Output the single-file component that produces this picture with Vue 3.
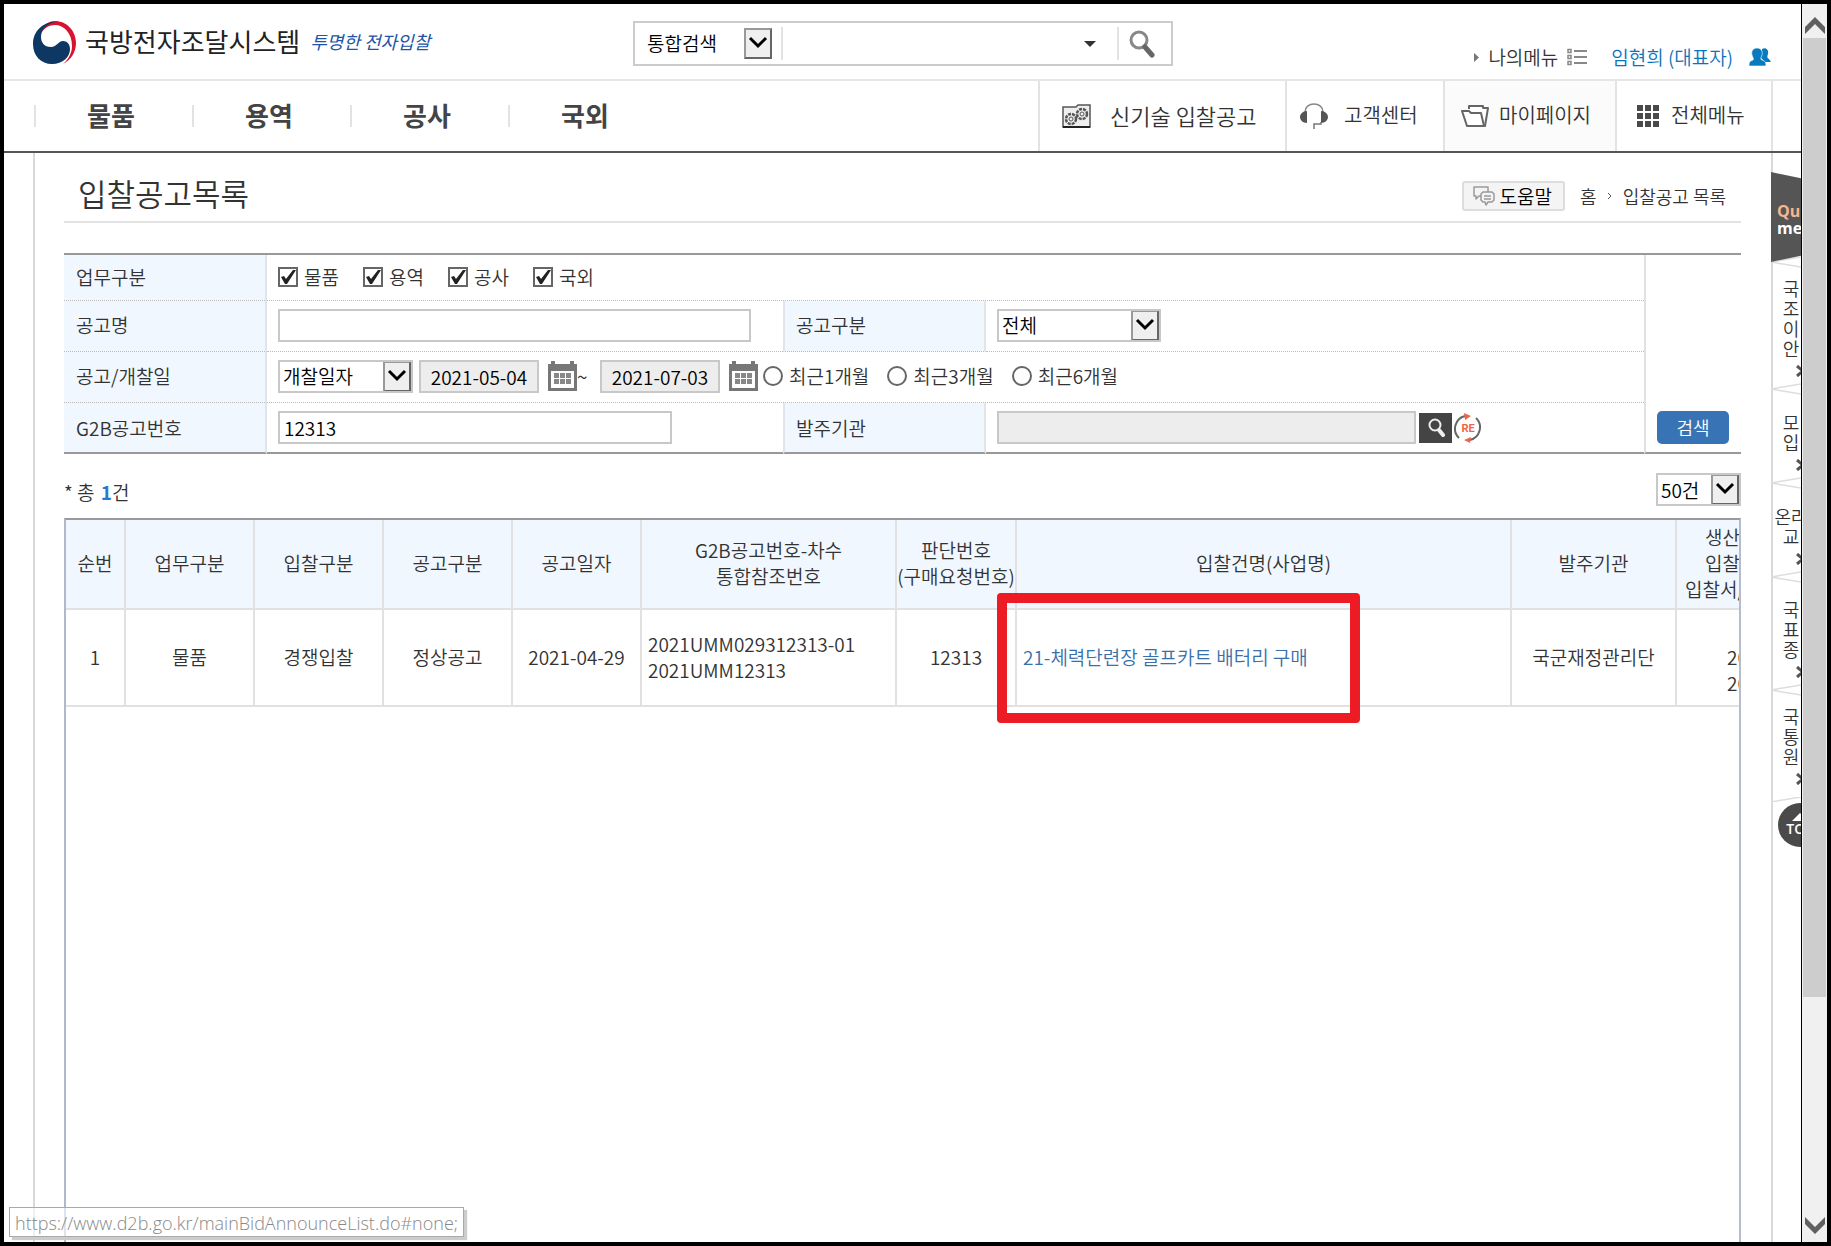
<script setup>
import { ref } from 'vue'

const mainMenu = ['물품', '용역', '공사', '국외']
const kinds = ref([
  { name: '물품', on: true },
  { name: '용역', on: true },
  { name: '공사', on: true },
  { name: '국외', on: true }
])
const periods = ['최근1개월', '최근3개월', '최근6개월']
const period = ref('')
const g2bNo = ref('12313')
const dateFrom = ref('2021-05-04')
const dateTo = ref('2021-07-03')

const headings = [
  ['순번'], ['업무구분'], ['입찰구분'], ['공고구분'], ['공고일자'],
  ['G2B공고번호-차수', '통합참조번호'],
  ['판단번호', '(구매요청번호)'],
  ['입찰건명(사업명)'], ['발주기관']
]

const quickItems = [
  { lines: ['국', '조', '이', '안'], height: 127 },
  { lines: ['모', '입'], height: 94 },
  { lines: ['온라', '교'], height: 94 },
  { lines: ['국', '표', '종'], height: 113 },
  { lines: ['국', '통', '원'], height: 107 }
]
</script>

<template>
  <div class="frame">
    <div class="page">
      <header class="top">
        <a class="logo" href="#">
          <svg width="44" height="44" viewBox="0 0 44 44" aria-hidden="true">
            <path d="M22 0C33 0 43 9 43 22C43 31 38 39 30 43C36 38 39 31 39 25C39 12 31 4 22 4C15 4 10 8 8 13C9 6 14 0 22 0Z" fill="#d8122f" />
            <path d="M22 1C10 1 0 10 0 23C0 35 8 43 19 43C30 43 37 36 37 28C37 23 34 20 30 20C25 20 24 26 18 26C11 26 8 21 8 16C8 8 14 3 22 1Z" fill="#0e3763" />
          </svg>
          <span class="logo-name">국방전자조달시스템</span>
          <span class="slogan">투명한 전자입찰</span>
        </a>
        <form class="finder" @submit.prevent>
          <select class="pick finder-pick" aria-label="검색 구분"><option>통합검색</option></select>
          <input class="finder-text" type="text" aria-label="검색어" />
          <button class="bare finder-drop" type="button" aria-label="펼치기">
            <svg width="12" height="6" viewBox="0 0 12 6"><path d="M0 0H12L6 6Z" fill="#333" /></svg>
          </button>
          <button class="bare finder-go" type="submit" aria-label="검색">
            <svg width="28" height="28" viewBox="0 0 28 28" fill="none">
              <circle cx="11" cy="10" r="8" stroke="#888" stroke-width="3" />
              <path d="M17 17L24 25" stroke="#666" stroke-width="5" stroke-linecap="round" />
            </svg>
          </button>
        </form>
        <div class="account">
          <a class="my-menu" href="#">
            <svg width="5" height="9" viewBox="0 0 5 9"><path d="M0 0L5 4.500L0 9Z" fill="#777" /></svg>
            <span>나의메뉴</span>
            <svg width="20" height="18" viewBox="0 0 20 18" fill="none" stroke="#888">
              <path d="M1 1.500H4V4.500H1ZM1 7.500H4V10.500H1ZM1 13.500H4V16.500H1Z" stroke-width="1.500" />
              <path d="M7 3H20M7 9H20M7 15H20" stroke-width="2" />
            </svg>
          </a>
          <a class="user" href="#">
            <span>임현희 (대표자)</span>
            <svg width="22" height="18" viewBox="0 0 22 18" fill="#0a7abf">
              <path d="M13 1C17 -1 20 2 19 6C18 9 18 10 20 11L22 14H16L12 10Z" />
              <path d="M8 0C12 0 14 3 13 7C12 10 11 11 13 12C16 13 17 14 17 18H0C0 14 1 13 4 12C5 11 4 10 3 7C2 3 4 0 8 0Z" stroke="#fff" stroke-width=".6" />
            </svg>
          </a>
        </div>
      </header>

      <nav class="nav">
        <ul class="nav-main">
          <li v-for="m in mainMenu" :key="m"><a href="#">{{ m }}</a></li>
        </ul>
        <a class="util tech" href="#">
          <svg width="29" height="24" viewBox="0 0 29 24" fill="none" stroke="#555">
            <path d="M1 3H14L16 1H28V23H1Z" stroke-width="1.500" fill="#eee" />
            <path d="M1 23H28" stroke-width="2" stroke="#222" />
            <circle cx="9" cy="15" r="5" stroke-width="2.500" stroke-dasharray="3 1" />
            <circle cx="9" cy="15" r="2" />
            <circle cx="20" cy="10" r="5" stroke-width="2.500" stroke-dasharray="3 1" />
            <circle cx="20" cy="10" r="2" />
          </svg>
          <span>신기술 입찰공고</span>
        </a>
        <a class="util help" href="#">
          <svg width="28" height="27" viewBox="0 0 28 27" fill="none">
            <path d="M5 13V9C5 4 9 1 14 1S23 4 23 9V13" stroke="#888" stroke-width="1.500" />
            <path d="M7 8V20C3 20 0 17 0 14S3 8 7 8ZM21 8V20C25 20 28 17 28 14S25 8 21 8Z" fill="#555" />
            <path d="M21 19V21H14V26" stroke="#777" stroke-width="1.500" />
          </svg>
          <span>고객센터</span>
        </a>
        <a class="util mypage" href="#">
          <svg width="28" height="22" viewBox="0 0 28 22" fill="#fff" stroke="#666" stroke-width="2" stroke-linejoin="round">
            <path d="M8 4V1H22V3H27L24 21H8" />
            <path d="M1 6H8L10 8H20L23 21H6Z" />
          </svg>
          <span>마이페이지</span>
        </a>
        <a class="util allmenu" href="#">
          <svg width="22" height="22" viewBox="0 0 22 22" fill="#4a4a4a">
            <path d="M0 0H6V6H0ZM8 0H14V6H8ZM16 0H22V6H16ZM0 8H6V14H0ZM8 8H14V14H8ZM16 8H22V14H16ZM0 16H6V22H0ZM8 16H14V22H8ZM16 16H22V22H16Z" />
          </svg>
          <span>전체메뉴</span>
        </a>
      </nav>

      <div class="body">
        <main class="content">
          <div class="title-row">
            <h1>입찰공고목록</h1>
            <button class="help-btn" type="button">
              <svg width="22" height="20" viewBox="0 0 22 20" fill="#f4f4f4" stroke="#999" stroke-width="1.500" stroke-linejoin="round">
                <path d="M1 1H15V10H6L3 13V10H1Z" />
                <path d="M10 6H19L21 8V14L19 16H15L13 19L12 16H10L8 14V8Z" />
                <path d="M11 10H18M11 13H18" />
              </svg>
              <span>도움말</span>
            </button>
            <div class="crumbs">
              <a href="#">홈</a>
              <svg width="6" height="8" viewBox="0 0 6 8" fill="none"><path d="M1 1L4 4L1 7" stroke="#555" /></svg>
              <span>입찰공고 목록</span>
            </div>
          </div>

          <form @submit.prevent>
            <table class="cond">
              <colgroup><col class="c-label" /><col class="c-left" /><col class="c-label" /><col /><col class="c-go" /></colgroup>
              <tbody>
                <tr class="r-first">
                  <th scope="row">업무구분</th>
                  <td colspan="3">
                    <div class="line kinds">
                      <label v-for="k in kinds" :key="k.name"><input v-model="k.on" type="checkbox" />{{ k.name }}</label>
                    </div>
                  </td>
                  <td class="go" rowspan="4"><button class="search-btn" type="submit">검색</button></td>
                </tr>
                <tr>
                  <th scope="row"><label for="nm">공고명</label></th>
                  <td><input id="nm" class="box w-name" type="text" /></td>
                  <th class="second" scope="row"><label for="ty">공고구분</label></th>
                  <td><select id="ty" class="box pick w-type"><option>전체</option></select></td>
                </tr>
                <tr>
                  <th scope="row"><label for="dt">공고/개찰일</label></th>
                  <td colspan="3">
                    <div class="line dates">
                      <select id="dt" class="box pick w-date-kind"><option>개찰일자</option></select>
                      <input v-model="dateFrom" class="box date" type="text" readonly aria-label="시작일" />
                      <button class="bare cal" type="button" aria-label="시작일 달력">
                        <svg width="29" height="30" viewBox="0 0 29 30">
                          <path d="M0 3H3V0H7V3H22V0H26V3H29V30H0Z" fill="#777" />
                          <path d="M3 10H26V27H3Z" fill="#fff" />
                          <path d="M6 12H11V17H6ZM12 12H17V17H12ZM18 12H23V17H18ZM6 18H11V23H6ZM12 18H17V23H12ZM18 18H23V23H18Z" fill="#888" />
                        </svg>
                      </button>
                      <span class="tilde">~</span>
                      <input v-model="dateTo" class="box date" type="text" readonly aria-label="종료일" />
                      <button class="bare cal" type="button" aria-label="종료일 달력">
                        <svg width="29" height="30" viewBox="0 0 29 30">
                          <path d="M0 3H3V0H7V3H22V0H26V3H29V30H0Z" fill="#777" />
                          <path d="M3 10H26V27H3Z" fill="#fff" />
                          <path d="M6 12H11V17H6ZM12 12H17V17H12ZM18 12H23V17H18ZM6 18H11V23H6ZM12 18H17V23H12ZM18 18H23V23H18Z" fill="#888" />
                        </svg>
                      </button>
                      <label v-for="p in periods" :key="p" class="period"><input v-model="period" type="radio" name="period" :value="p" />{{ p }}</label>
                    </div>
                  </td>
                </tr>
                <tr class="r-last">
                  <th scope="row"><label for="g2b">G2B공고번호</label></th>
                  <td><input id="g2b" v-model="g2bNo" class="box w-g2b" type="text" /></td>
                  <th class="second" scope="row"><label for="org">발주기관</label></th>
                  <td>
                    <div class="line">
                      <input id="org" class="box w-org" type="text" readonly />
                      <button class="bare org-find" type="button" aria-label="기관 찾기">
                        <svg width="18" height="20" viewBox="0 0 18 20" fill="none" stroke="#eee">
                          <circle cx="8" cy="7" r="5.500" stroke-width="2" />
                          <path d="M12 12L16 17" stroke-width="4" stroke-linecap="round" />
                        </svg>
                      </button>
                      <button class="bare" type="button" aria-label="초기화">
                        <svg width="27" height="30" viewBox="0 0 27 30" fill="none">
                          <path d="M5 25A13 13 0 0 1 11 3M22 5A13 13 0 0 1 16 27" stroke="#666" stroke-width="2" />
                          <path d="M10 0L17 3L11 7ZM17 24L10 27L16 30Z" fill="#ee6549" />
                          <text x="14" y="19" text-anchor="middle" font-family="Roboto, sans-serif" font-size="11" font-weight="700" fill="#ee6549">RE</text>
                        </svg>
                      </button>
                    </div>
                  </td>
                </tr>
              </tbody>
            </table>
          </form>

          <div class="summary">
            <p>* 총 <b>1</b>건</p>
            <select class="box pick w-rows" aria-label="표시 건수"><option>50건</option></select>
          </div>

          <div class="list">
            <table class="grid">
              <colgroup>
                <col class="g-no" /><col class="g-mid" /><col class="g-mid" /><col class="g-mid" /><col class="g-mid" />
                <col class="g-ref" /><col class="g-req" /><col /><col class="g-org" /><col class="g-cut" />
              </colgroup>
              <thead>
                <tr>
                  <th v-for="h in headings" :key="h[0]" scope="col"><div v-for="l in h" :key="l">{{ l }}</div></th>
                  <th class="cut" scope="col">
                    <div class="in">생산</div>
                    <div class="in">입찰</div>
                    <div>입찰서/</div>
                  </th>
                </tr>
              </thead>
              <tbody>
                <tr>
                  <td>1</td>
                  <td>물품</td>
                  <td>경쟁입찰</td>
                  <td>정상공고</td>
                  <td>2021-04-29</td>
                  <td class="left"><div>2021UMM029312313-01</div><div>2021UMM12313</div></td>
                  <td>12313</td>
                  <td class="left subject">
                    <a href="#none">21-체력단련장 골프카트 배터리 구매</a>
                    <span class="marker"></span>
                  </td>
                  <td>국군재정관리단</td>
                  <td class="cut"><div>&nbsp;</div><div>20</div><div>20</div></td>
                </tr>
              </tbody>
            </table>
          </div>
        </main>

        <aside class="quick">
          <div class="quick-head"><span class="qu">Qu</span><span class="me">me</span></div>
          <a v-for="(q, i) in quickItems" :key="i" class="quick-item" href="#" :style="{ height: q.height + 'px' }">
            <svg class="fold" width="30" height="12" viewBox="0 0 30 12"><path d="M30 1L0 6L30 11" fill="#fff" stroke="#ddd" stroke-width="1.500" /></svg>
            <span class="quick-text"><span v-for="(l, n) in q.lines" :key="n">{{ l }}</span></span>
            <svg class="tick" width="12" height="12" viewBox="0 0 12 12" fill="none"><path d="M1 1L7 6L1 11" stroke="#555" stroke-width="3" /></svg>
          </a>
          <svg class="fold-end" width="30" height="6" viewBox="0 0 30 6" fill="none"><path d="M30 0L0 5" stroke="#ddd" stroke-width="1.500" /></svg>
          <a class="to-top" href="#">
            <svg width="16" height="8" viewBox="0 0 16 8"><path d="M8 0L16 8H0Z" fill="#fff" /></svg>
            <span>TOP</span>
          </a>
        </aside>
      </div>

      <div class="status">https://www.d2b.go.kr/mainBidAnnounceList.do#none;</div>
    </div>

    <div class="scroll">
      <button class="bare step up" type="button" aria-label="위로">
        <svg width="20" height="17" viewBox="0 0 20 17"><path d="M0 10L10 0L20 10V17L10 7L0 17Z" fill="#606060" /></svg>
      </button>
      <div class="track"><div class="thumb"></div></div>
      <button class="bare step" type="button" aria-label="아래로">
        <svg width="20" height="17" viewBox="0 0 20 17"><path d="M0 7L10 17L20 7V0L10 10L0 0Z" fill="#606060" /></svg>
      </button>
    </div>
  </div>
</template>

<style>
body { margin: 0; }
</style>

<style scoped>
* { box-sizing: border-box; }
.frame {
  display: flex;
  min-height: 100vh;
  border: 4px solid #000;
  background: #fff;
  color: #333;
  font-family: "Noto Sans CJK KR", sans-serif;
  font-size: 19px;
  font-weight: 350;
  line-height: 26px;
  overflow: hidden;
}
a { color: inherit; text-decoration: none; }
svg { display: block; flex: none; }
input, select, button { font: inherit; color: #000; border-radius: 0; margin: 0; }
.bare { border: 0; padding: 0; background: none; }
.page { position: relative; flex: 1; min-width: 0; display: flex; flex-direction: column; }

/* header */
.top {
  display: flex;
  align-items: flex-start;
  height: 77px;
  border-bottom: 2px solid #e6e6e6;
  padding: 17px 30px 0 29px;
}
.logo { display: flex; align-items: center; width: 600px; height: 44px; }
.logo-name { margin-left: 8px; padding-bottom: 4px; font-size: 26px; font-weight: 400; color: #222; }
.slogan { margin-left: 10px; padding-bottom: 4px; font-size: 18px; font-weight: 400; font-style: italic; color: #1c56a8; }
.finder { display: flex; align-items: center; width: 540px; height: 45px; border: 2px solid #ccc; }
.pick {
  appearance: none;
  background: #fff url("data:image/svg+xml,%3Csvg xmlns='http://www.w3.org/2000/svg' width='28' height='31' viewBox='0 0 28 31'%3E%3Cpath d='M0 0H28V31H0Z' fill='%23666'/%3E%3Cpath d='M0 0H28L26 2H2V29L0 31Z' fill='%23999'/%3E%3Cpath d='M2 2H26V29H2Z' fill='%23efefef'/%3E%3Cpath d='M6 10L14 18L22 10' fill='none' stroke='%23000' stroke-width='3'/%3E%3C/svg%3E") no-repeat right center;
}
.finder-pick { width: 137px; height: 33px; border: 0; padding: 0 0 2px 12px; }
.finder-text { flex: 1; min-width: 0; height: 33px; margin-left: 9px; border: 0; border-left: 2px solid #e3e3e3; background: none; }
.finder-drop { width: 28px; height: 33px; margin-right: 13px; display: flex; align-items: center; justify-content: center; }
.finder-go { width: 54px; height: 33px; border-left: 2px solid #e3e3e3; display: flex; align-items: center; padding-left: 9px; }
.account { display: flex; align-items: center; gap: 24px; margin-left: auto; padding-top: 23px; }
.my-menu { display: flex; align-items: center; gap: 9px; }
.user { display: flex; align-items: center; gap: 16px; color: #0a74ba; }

/* main menu */
.nav { display: flex; height: 72px; border-bottom: 2px solid #555; }
.nav-main { display: flex; flex: 1; margin: 0; padding: 0 0 0 30px; list-style: none; align-items: center; }
.nav-main li { width: 158px; border-left: 2px solid #e3e3e3; height: 22px; padding-left: 51px; display: flex; align-items: center; }
.nav-main a { padding-bottom: 2px; font-size: 26px; font-weight: 700; color: #444; }
.util { display: flex; align-items: center; border-left: 2px solid #e3e3e3; font-size: 20px; }
.util span { padding-bottom: 2px; }
.tech { width: 247px; gap: 19px; padding-left: 22px; font-size: 22px; }
.help { width: 158px; gap: 16px; padding-left: 13px; }
.mypage { width: 172px; gap: 10px; padding-left: 16px; background: #fbfbfb; }
.allmenu { width: 186px; gap: 12px; padding-left: 20px; background: linear-gradient(#e3e3e3, #e3e3e3) no-repeat 154px 0 / 2px 100%; }

/* content */
.body { display: flex; flex: 1; }
.content {
  flex: 1;
  min-width: 0;
  display: flex;
  flex-direction: column;
  margin-left: 29px;
  padding: 0 30px 0 29px;
  border-left: 2px solid #d9d9d9;
}
.title-row { display: flex; align-items: center; height: 70px; padding: 17px 15px 0 14px; border-bottom: 2px solid #e3e3e3; margin-bottom: 30px; }
h1 { flex: 1; margin: 0; padding-bottom: 6px; font-size: 31px; font-weight: 350; line-height: 44px; color: #333; }
.help-btn { display: flex; align-items: center; gap: 5px; height: 30px; padding: 0 11px 0 9px; border: 2px solid #ddd; border-radius: 3px; background: #f4f4f4; }
.crumbs { display: flex; align-items: center; gap: 10px; margin-left: 15px; font-size: 18px; }

/* search conditions */
.cond { width: 100%; table-layout: fixed; border-collapse: separate; border-spacing: 0; border-top: 2px solid #999; }
.c-label { width: 203px; }
.c-left { width: 516px; }
.c-go { width: 97px; }
.cond th, .cond td { height: 51px; padding: 0 0 2px 11px; border-bottom: 1px dotted #bbb; font-weight: 350; text-align: left; vertical-align: middle; }
.cond th { padding-left: 12px; background: #f0f7ff; border-right: 2px solid #e1e4e8; }
.cond th.second { padding-left: 11px; border-left: 2px solid #e1e4e8; }
.cond .r-first th, .cond .r-first td { height: 46px; }
.cond .r-last th, .cond .r-last td, .cond .go { border-bottom: 2px solid #999; }
.cond .r-last th, .cond .r-last td { padding-bottom: 0; }
.cond .go { border-left: 2px solid #e1e1e1; vertical-align: bottom; padding: 0 0 8px 11px; }
.search-btn { display: block; width: 72px; height: 33px; padding: 0 0 2px; border: 0; border-radius: 5px; background: #3874b5; color: #fff; font-size: 18px; }
.line { display: flex; align-items: center; }
.kinds { gap: 24px; }
.kinds label, .period { display: flex; align-items: center; gap: 6px; }
input[type="checkbox"] {
  appearance: none;
  width: 20px;
  height: 20px;
  border: 2px solid #666;
  background: #fff;
}
input[type="checkbox"]:checked {
  background: url("data:image/svg+xml,%3Csvg xmlns='http://www.w3.org/2000/svg' width='16' height='16' viewBox='0 0 16 16'%3E%3Cpath d='M1 8L4 7L6 10L13 1H16L7 15H5Z' fill='%23222'/%3E%3C/svg%3E") center no-repeat;
}
input[type="radio"] { appearance: none; width: 20px; height: 20px; border: 2px solid #666; border-radius: 50%; }
input[type="radio"]:checked { background: radial-gradient(#222 4px, transparent 5px); }
.box { display: block; height: 33px; padding: 0 4px; border: 2px solid #c8c8c8; background-color: #fff; }
.box[readonly] { background-color: #ededed; }
select.box { padding: 0 0 0 3px; }
.w-name { width: 473px; }
.w-type { width: 164px; }
.w-date-kind { width: 135px; }
.date { width: 120px; margin-left: 6px; text-align: center; }
.cal { margin-left: 9px; }
.tilde { width: 17px; }
.period { margin-left: 5px; }
.period + .period { margin-left: 18px; }
.w-g2b { width: 394px; }
.w-org { width: 419px; }
.org-find { display: flex; align-items: center; justify-content: center; width: 33px; height: 30px; margin: 0 2px 0 3px; background: #444; }

/* result list */
.summary { display: flex; justify-content: space-between; align-items: center; height: 33px; margin: 19px 0 12px; }
.summary p { margin: 4px 0 0; }
.summary b { margin-left: 2px; font-weight: 700; color: #2b78d0; }
.w-rows { width: 85px; }
.list { flex: 1; border-left: 2px solid #b0b9cc; border-right: 2px solid #b5bccb; border-top: 2px solid #999; }
.grid { width: 100%; table-layout: fixed; border-collapse: separate; border-spacing: 0; }
.g-no { width: 60px; }
.g-mid { width: 129px; }
.g-ref { width: 255px; }
.g-req { width: 120px; }
.g-org { width: 165px; }
.g-cut { width: 62px; }
.grid th, .grid td { height: 97px; padding: 0 0 2px; border-right: 2px solid #e1e1e1; border-bottom: 2px solid #e1e1e1; font-weight: 350; text-align: center; white-space: nowrap; }
.grid th { height: 90px; background: #f0f7ff; }
.grid .left { padding-left: 6px; text-align: left; }
.grid .cut { overflow: hidden; border-right: 0; text-align: left; padding-left: 8px; }
.grid td.cut { padding-left: 50px; }
.grid .in { padding-left: 20px; }
.subject { position: relative; }
.subject a { color: #3870aa; }
.marker { position: absolute; left: -20px; top: -17px; width: 363px; height: 130px; border: 10px solid #ed1c24; border-radius: 4px; pointer-events: none; }

/* quick menu */
.quick { width: 30px; background: linear-gradient(#d9d9d9, #d9d9d9) no-repeat 0 0 / 2px 100%; overflow: hidden; padding-top: 19px; }
.quick-head {
  display: flex;
  flex-direction: column;
  justify-content: center;
  height: 90px;
  padding: 6px 0 0 6px;
  background: #555;
  clip-path: polygon(0 0, 100% 7%, 100% 93%, 0 100%);
  font-family: "Open Sans", sans-serif;
  font-size: 16px;
  line-height: 17px;
  font-weight: 700;
}
.qu { color: #f5b590; }
.me { color: #fff; }
.quick-item { display: flex; flex-direction: column; align-items: center; width: 40px; }
.fold { align-self: flex-start; margin-top: -6px; }
.quick-text { display: flex; flex-direction: column; align-items: center; line-height: 20px; margin: auto 0 7px; font-size: 18px; }
.tick { margin: 0 0 12px 22px; }
.to-top {
  display: flex;
  flex-direction: column;
  align-items: center;
  width: 44px;
  height: 44px;
  margin-left: 7px;
  padding-top: 10px;
  border-radius: 50%;
  background: #4a4a4a;
  color: #fff;
  font-family: "Open Sans", sans-serif;
  font-size: 14px;
  font-weight: 600;
  line-height: 16px;
}

/* browser chrome */
.status {
  position: absolute;
  left: 5px;
  bottom: 5px;
  height: 30px;
  padding: 0 5px;
  border: 1px solid #aaa;
  background: rgba(255, 255, 255, .6);
  box-shadow: 3px 3px 1px #ccc;
  color: #888;
  font-family: "Open Sans", sans-serif;
  font-size: 18px;
  font-weight: 300;
  line-height: 30px;
}
.scroll { display: flex; flex-direction: column; width: 26px; border-left: 1px solid #000; background: #f0f0f0; }
.step { display: flex; align-items: center; justify-content: center; height: 34px; }
.up { padding-top: 9px; }
.track { flex: 1; display: flex; flex-direction: column; padding: 0 1px; }
.thumb { flex: 0 0 82%; background: #cdcdcd; }
</style>
